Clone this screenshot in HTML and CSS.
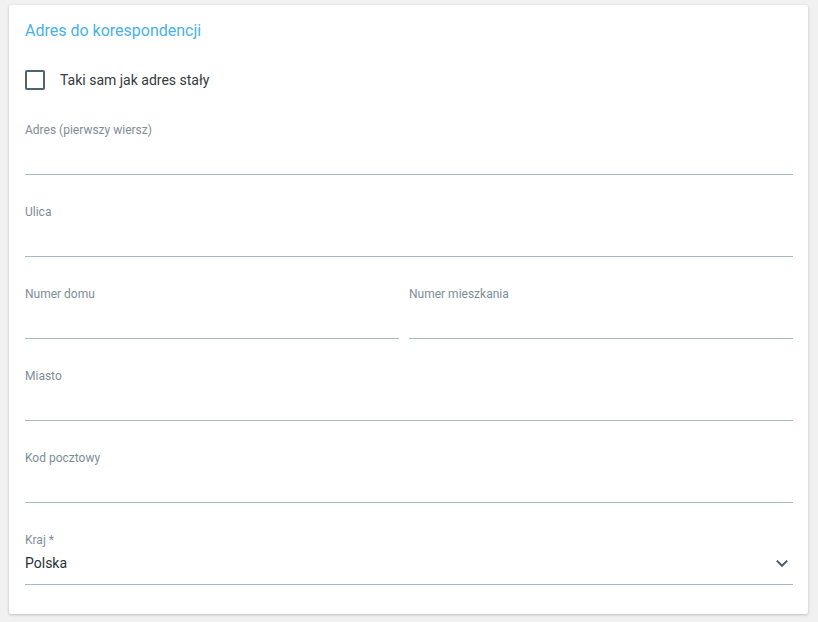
FILE: index.html
```html
<!DOCTYPE html>
<html lang="pl">
<head>
<meta charset="utf-8">
<title>Adres do korespondencji</title>
<link rel="stylesheet" href="styles.css">
</head>
<body>
<div class="card">
  <h2 class="title">Adres do korespondencji</h2>
  <label class="check">
    <span class="box"></span>
    <span class="check-label">Taki sam jak adres stały</span>
  </label>
  <div class="fields">
    <div class="field">
      <div class="label">Adres (pierwszy wiersz)</div>
      <div class="input"></div>
    </div>
    <div class="field">
      <div class="label">Ulica</div>
      <div class="input"></div>
    </div>
    <div class="row">
      <div class="field half-left">
        <div class="label">Numer domu</div>
        <div class="input"></div>
      </div>
      <div class="field">
        <div class="label">Numer mieszkania</div>
        <div class="input"></div>
      </div>
    </div>
    <div class="field">
      <div class="label">Miasto</div>
      <div class="input"></div>
    </div>
    <div class="field">
      <div class="label">Kod pocztowy</div>
      <div class="input"></div>
    </div>
    <div class="field">
      <div class="label">Kraj *</div>
      <div class="input select">
        <span class="value">Polska</span>
        <svg class="chevron" width="14" height="9" viewBox="0 0 14 9"><path d="M1.8 1.6 L7 6.8 L12.2 1.6" fill="none" stroke="#4a5f6b" stroke-width="2"/></svg>
      </div>
    </div>
  </div>
</div>
</body>
</html>
```
FILE: styles.css
```css
html, body {
  margin: 0;
  padding: 0;
  background: #f1f1f1;
  font-family: Roboto, "Liberation Sans", Arial, sans-serif;
}
body {
  padding: 5px 10px 8px 9px;
}
.card {
  background: #fff;
  border-radius: 2px;
  box-shadow: 0 1px 3px rgba(0,0,0,0.22);
  padding: 16px 15px 29px 16px;
}
.title {
  margin: 0;
  font-size: 16px;
  line-height: 20px;
  font-weight: 400;
  color: #47b1ea;
}
.check {
  display: flex;
  align-items: center;
  margin-top: 29px;
  height: 20px;
}
.box {
  box-sizing: border-box;
  width: 20px;
  height: 20px;
  border: 2px solid #4f6470;
  border-radius: 2px;
}
.check-label {
  margin-left: 15px;
  font-size: 14px;
  line-height: 20px;
  color: #333a40;
}
.fields {
  display: flex;
  flex-direction: column;
  gap: 29px;
  margin-top: 32px;
}
.row {
  display: grid;
  grid-template-columns: 1fr 1fr;
}
.half-left {
  padding-right: 10px;
}
.label {
  font-size: 12px;
  line-height: 16px;
  color: #7e8d98;
}
.input {
  box-sizing: border-box;
  height: 37px;
  border-bottom: 1px solid #aab8c1;
}
.select {
  display: flex;
  align-items: flex-start;
  justify-content: space-between;
  padding-top: 5px;
}
.value {
  font-size: 14px;
  line-height: 20px;
  color: #263238;
}
.chevron {
  margin-top: 6px;
  margin-right: 4px;
}
```
